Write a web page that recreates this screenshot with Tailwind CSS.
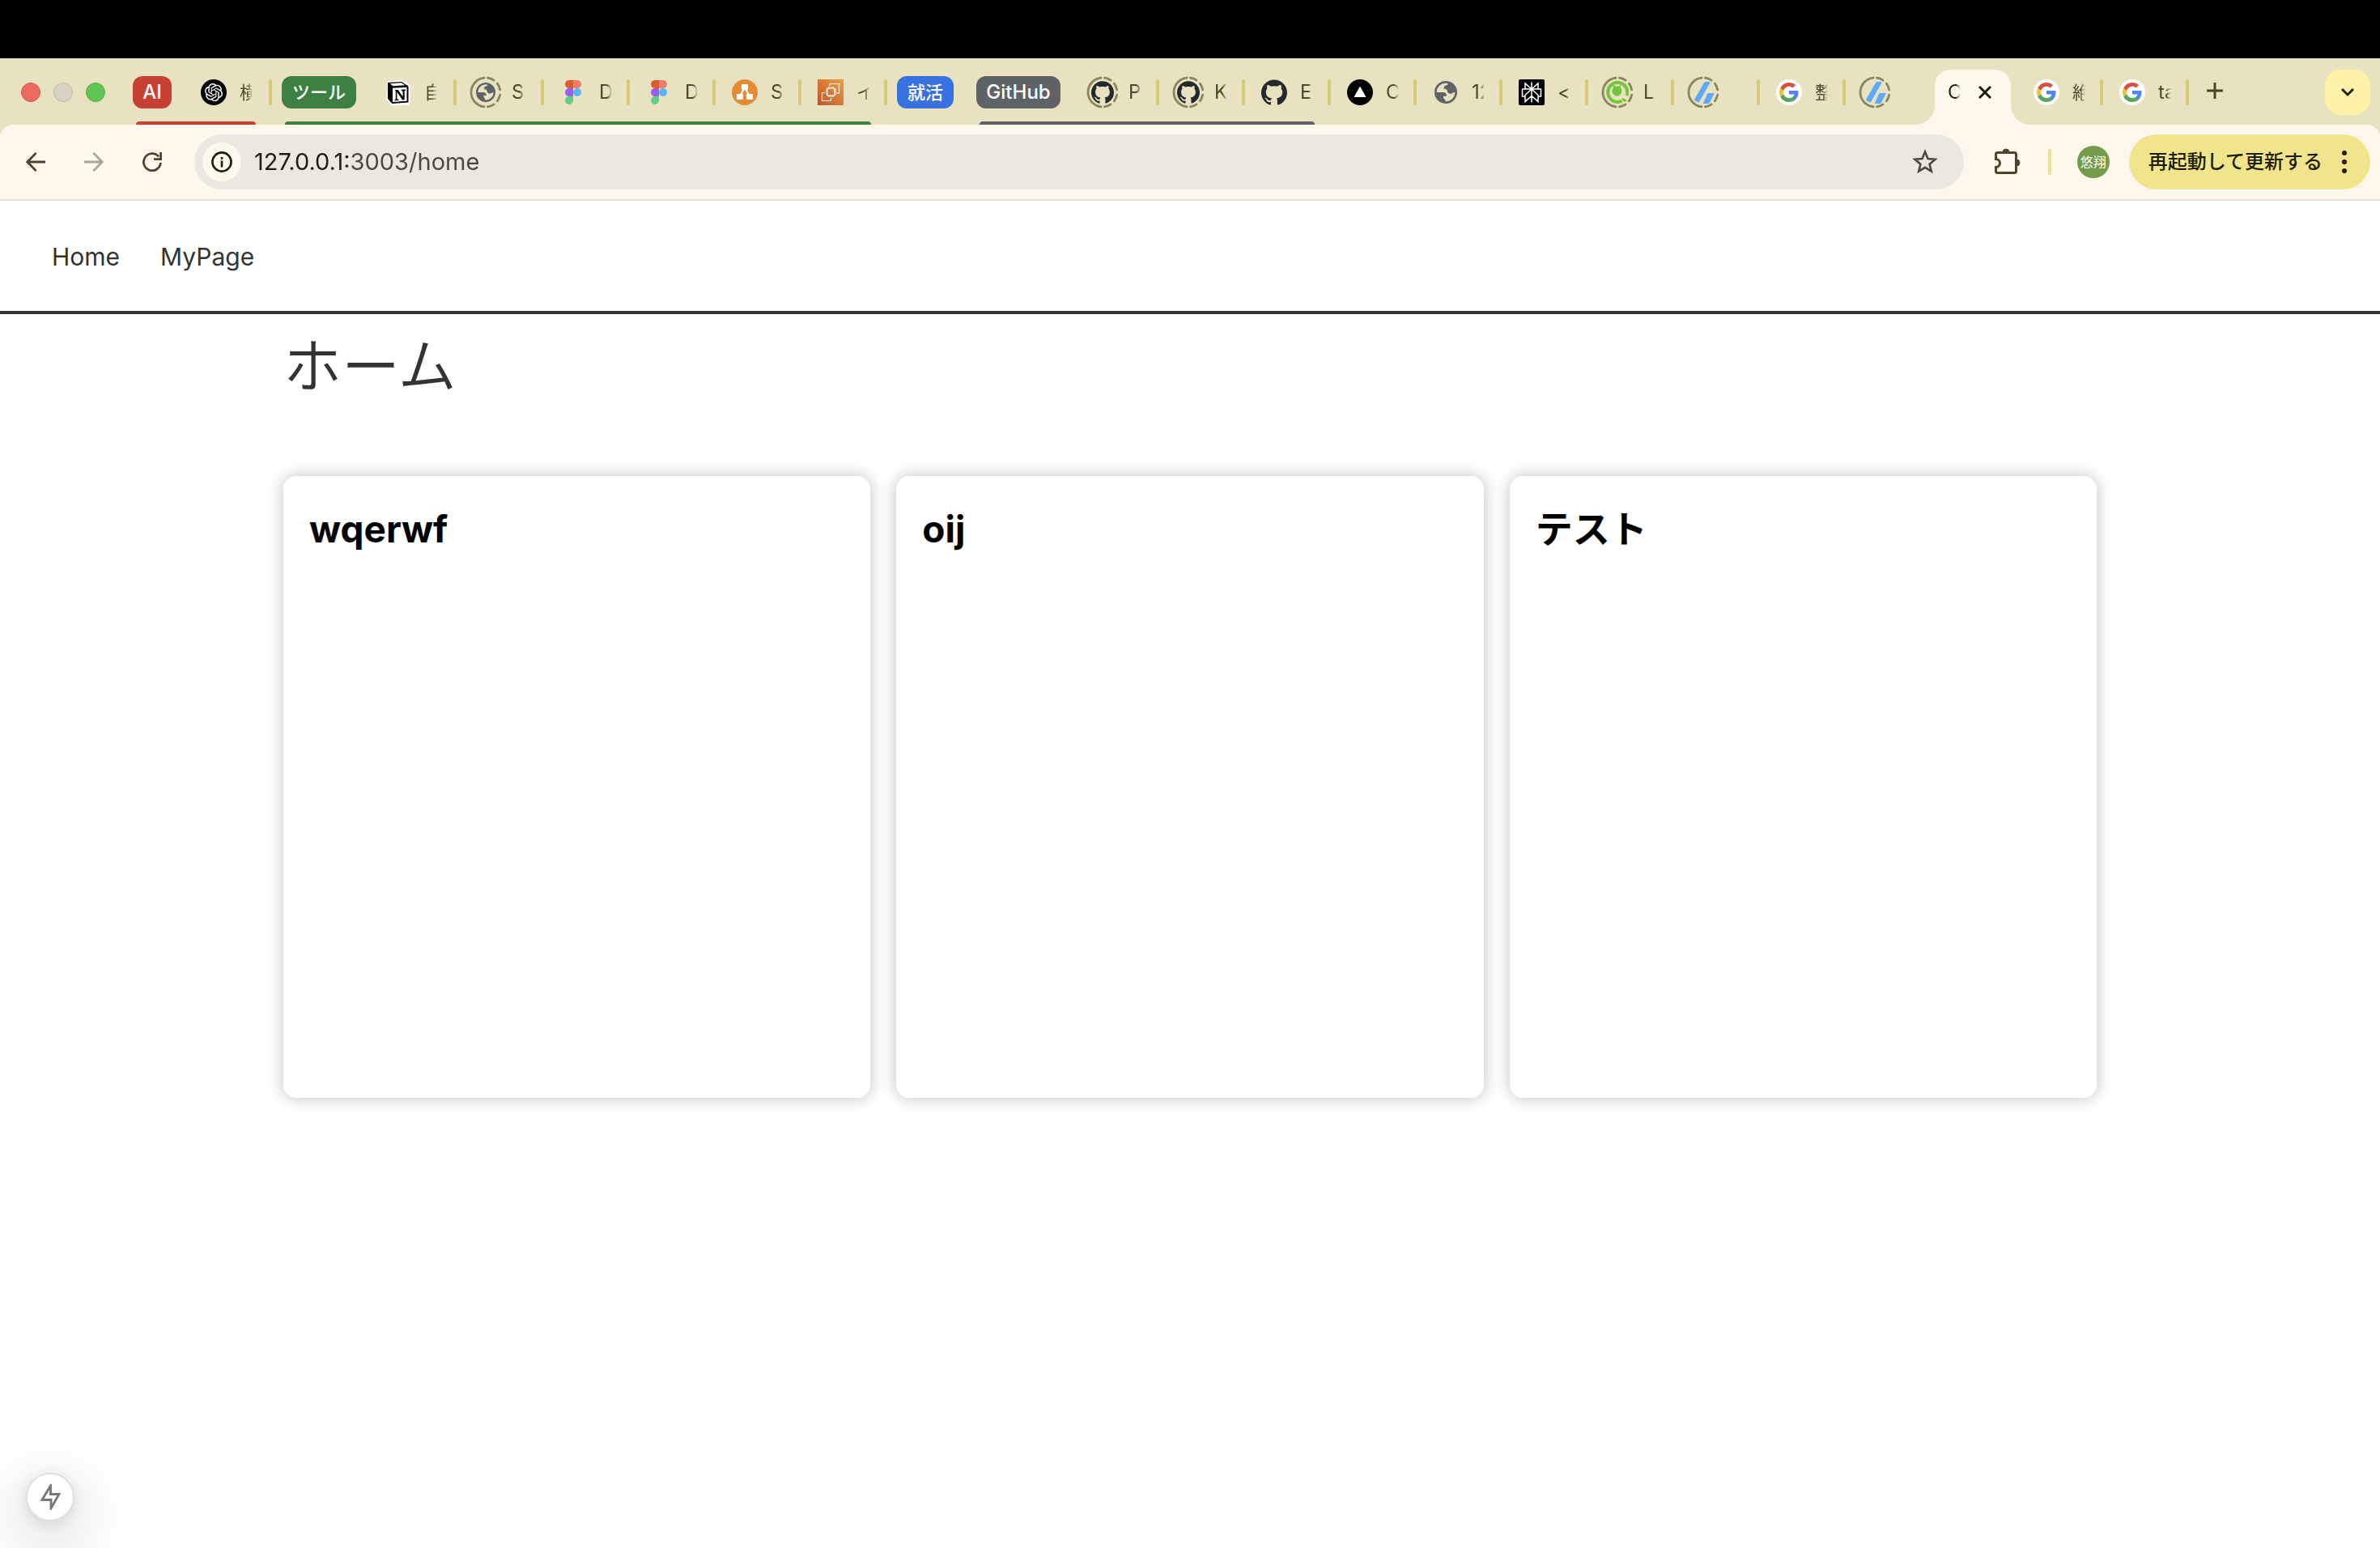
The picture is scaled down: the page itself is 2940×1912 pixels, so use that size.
<!DOCTYPE html>
<html lang="ja">
<head>
<meta charset="utf-8">
<title>Home</title>
<script src="https://cdn.jsdelivr.net/npm/@tailwindcss/browser@4"></script>
</head>
<body class="flex min-h-screen flex-col bg-white font-['Inter','Noto_Sans_CJK_JP',sans-serif] text-[#333333]">

<svg class="absolute size-0" aria-hidden="true">
  <symbol id="ring" viewBox="0 0 40 40">
    <path d="M18.1 2.1A18 18 0 0 0 18.1 37.9M22.5 2.2A18 18 0 0 1 30.1 5.1M34.4 9.2A18 18 0 0 1 37.7 16.9M37.7 23.1A18 18 0 0 1 34.4 30.8M30.1 34.9A18 18 0 0 1 22.5 37.8" fill="none" stroke="#8a8460" stroke-width="2.8" stroke-linecap="round"/>
  </symbol>
  <symbol id="globe" viewBox="0 0 84 84">
    <circle cx="42" cy="42" r="38" fill="none" stroke="#5f6368" stroke-width="8"/>
    <path d="M50 6C52 12 48 16 40 17C36 18 36 24 34 30C40 28 46 30 47 36C48 44 54 48 62 47C68 46 70 40 80 42A38 38 0 0 0 50 6Z" fill="#5f6368"/>
    <path d="M4 42H30C42 42 45 48 45 56H34C32 62 34 66 40 70V80A38 38 0 0 1 4 42Z" fill="#5f6368"/>
  </symbol>
  <symbol id="openai" viewBox="0 0 32 32">
    <circle cx="16" cy="16" r="16" fill="#000"/>
    <g transform="translate(5 5) scale(.92)"><path fill="#fff" d="M22.2819 9.8211a5.9847 5.9847 0 0 0-.5157-4.9108 6.0462 6.0462 0 0 0-6.5098-2.9A6.0651 6.0651 0 0 0 4.9807 4.1818a5.9847 5.9847 0 0 0-3.9977 2.9 6.0462 6.0462 0 0 0 .7427 7.0966 5.98 5.98 0 0 0 .511 4.9107 6.051 6.051 0 0 0 6.5146 2.9001A5.9847 5.9847 0 0 0 13.2599 24a6.0557 6.0557 0 0 0 5.7718-4.2058 5.9894 5.9894 0 0 0 3.9977-2.9001 6.0557 6.0557 0 0 0-.7475-7.0729zm-9.022 12.6081a4.4755 4.4755 0 0 1-2.8764-1.0408l.1419-.0804 4.7783-2.7582a.7948.7948 0 0 0 .3927-.6813v-6.7369l2.02 1.1686a.071.071 0 0 1 .038.052v5.5826a4.504 4.504 0 0 1-4.4945 4.4944zm-9.6607-4.1254a4.4708 4.4708 0 0 1-.5346-3.0137l.142.0852 4.783 2.7582a.7712.7712 0 0 0 .7806 0l5.8428-3.3685v2.3324a.0804.0804 0 0 1-.0332.0615L9.74 19.9502a4.4992 4.4992 0 0 1-6.1408-1.6464zM2.3408 7.8956a4.485 4.485 0 0 1 2.3655-1.9728V11.6a.7664.7664 0 0 0 .3879.6765l5.8144 3.3543-2.0201 1.1685a.0757.0757 0 0 1-.071 0l-4.8303-2.7865A4.504 4.504 0 0 1 2.3408 7.872zm16.5963 3.8558L13.1038 8.364 15.1192 7.2a.0757.0757 0 0 1 .071 0l4.8303 2.7913a4.4944 4.4944 0 0 1-.6765 8.1042v-5.6772a.79.79 0 0 0-.407-.667zm2.0107-3.0231l-.142-.0852-4.7735-2.7818a.7759.7759 0 0 0-.7854 0L9.409 9.2297V6.8974a.0662.0662 0 0 1 .0284-.0615l4.8303-2.7866a4.4992 4.4992 0 0 1 6.6802 4.66zM8.3065 12.863l-2.02-1.1638a.0804.0804 0 0 1-.038-.0567V6.0742a4.4992 4.4992 0 0 1 7.3757-3.4537l-.142.0805L8.704 5.459a.7948.7948 0 0 0-.3927.6813zm1.0976-2.3654l2.602-1.4998 2.6069 1.4998v2.9994l-2.5974 1.4997-2.6067-1.4997Z"/></g>
  </symbol>
  <symbol id="notion" viewBox="0 0 32 32">
    <path d="M3 3.5L20 1.5L29.5 7V28.5L28 30.5L8.500 31.500L2.500 25Z" fill="#fff" stroke="#fff" stroke-width="2" stroke-linejoin="round"/>
    <path d="M3 4L20 3L28.500 8.500V28.500L8.500 30L3 24Z" fill="#000"/>
    <path d="M5.500 5.200L19.500 4.200L24.500 7.300L9.500 8.300Z" fill="#fff"/>
    <path d="M9 10.800L26.500 9.800V26.800L9 28Z" fill="#fff"/>
    <path d="M11.500 13.300L15.800 13L21.600 21.600V14.600L19.700 14.200V12.800L25 12.500V13.800L23.700 14.300V25.200L21.200 25.600L14.400 15.600V24.200L16.400 24.700V26L11.500 26.300V25L12.800 24.400V15Z" fill="#000"/>
  </symbol>
  <symbol id="figma" viewBox="0 0 20 30">
    <path d="M5 0H10V10H5A5 5 0 0 1 5 0Z" fill="#e0592f"/>
    <path d="M10 0H15A5 5 0 0 1 15 10H10Z" fill="#ee7c68"/>
    <path d="M5 10H10V20H5A5 5 0 0 1 5 10Z" fill="#9a5cf6"/>
    <circle cx="15" cy="15" r="5" fill="#57b6fa"/>
    <path d="M5 20H10V25A5 5 0 1 1 5 20Z" fill="#62cd89"/>
  </symbol>
  <symbol id="drawio" viewBox="0 0 32 32">
    <circle cx="16" cy="16" r="16" fill="#e38c34"/>
    <path d="M16 10L10 21M16 10L22 21" stroke="#fff" stroke-width="2"/>
    <rect x="12" y="6" width="8" height="7" rx="1" fill="#fff"/>
    <rect x="6" y="18" width="8" height="7" rx="1" fill="#fff"/>
    <rect x="18" y="18" width="8" height="7" rx="1" fill="#fff"/>
  </symbol>
  <linearGradient id="ec2fill" x1="0" y1="1" x2="1" y2="0"><stop offset="0" stop-color="#bd5530"/><stop offset="1" stop-color="#f09e38"/></linearGradient>
  <symbol id="ec2" viewBox="0 0 32 32">
    <rect width="32" height="32" fill="url(#ec2fill)"/>
    <g fill="none" stroke="#fff" stroke-width="1.2">
      <rect x="12" y="11" width="9" height="9"/>
      <path d="M15 5.500H26.500V17H23M9 16.500H5.500V26.500H16.500V23M14 9V11M16.500 9V11M19 9V11M14 20V22M16.500 20V22M19 20V22M10 13H12M10 15.500H12M10 18H12M21 13H23M21 15.500H23M21 18H23M15 8V5.500"/>
    </g>
  </symbol>
  <symbol id="github" viewBox="0 0 24 24">
    <path fill="#24292f" d="M12 .297c-6.630 0-12 5.373-12 12 0 5.303 3.438 9.800 8.205 11.385.6.113.82-.258.82-.577 0-.285-.01-1.040-.015-2.040-3.338.724-4.042-1.610-4.042-1.610C4.422 18.070 3.633 17.700 3.633 17.700c-1.087-.744.084-.729.084-.729 1.205.084 1.838 1.236 1.838 1.236 1.070 1.835 2.809 1.305 3.495.998.108-.776.417-1.305.76-1.605-2.665-.3-5.466-1.332-5.466-5.930 0-1.310.465-2.380 1.235-3.220-.135-.303-.54-1.523.105-3.176 0 0 1.005-.322 3.300 1.230.96-.267 1.980-.399 3-.405 1.020.006 2.040.138 3 .405 2.280-1.552 3.285-1.230 3.285-1.230.645 1.653.24 2.873.12 3.176.765.84 1.230 1.910 1.230 3.220 0 4.610-2.805 5.625-5.475 5.920.42.36.81 1.096.81 2.220 0 1.606-.015 2.896-.015 3.286 0 .315.21.69.825.57C20.565 22.092 24 17.592 24 12.297c0-6.627-5.373-12-12-12"/>
  </symbol>
  <symbol id="vercel" viewBox="0 0 32 32">
    <circle cx="16" cy="16" r="16" fill="#000"/><path d="M16 8.500L23.500 22H8.500Z" fill="#fff"/>
  </symbol>
  <symbol id="perplexity" viewBox="0 0 32 32">
    <rect width="32" height="32" rx="2" fill="#000"/>
    <path d="M16 3.500V28.500M16 12L8 5V12M16 12L24 5V12M4.500 12H27.500V21H24M27.500 12M8 21H4.500V12M16 12L8 19.500V27.500L16 20.500L24 27.500V19.500Z" fill="none" stroke="#fff" stroke-width="1.500"/>
  </symbol>
  <symbol id="qiita" viewBox="0 0 28 28">
    <path d="M25.500 18A12 12 0 1 0 19.500 24.700" fill="none" stroke="#73c63b" stroke-width="4"/>
    <circle cx="13.500" cy="12.500" r="6" fill="#73c63b"/>
    <path d="M8 5L10 10L13 7ZM19 5L17 10L14 7Z" fill="#73c63b"/>
    <path d="M20 22L24.500 25" stroke="#73c63b" stroke-width="3"/>
  </symbol>
  <symbol id="zenn" viewBox="0 0 28 28">
    <path d="M17 1H21Q23 1 22 3L9 26Q8.500 27 7 26L3.500 24Q2.800 23.500 3.200 22.800L15 2.200Q15.600 1 17 1ZM20.500 15H26.500Q28 15 27.300 16.300L22 26.500Q21.300 28 20 28H14.500Q13.500 28 14 27L19 16Q19.500 15 20.500 15Z" fill="#5fa8fb"/>
  </symbol>
  <symbol id="google" viewBox="0 0 32 32">
    <circle cx="16" cy="16" r="16" fill="#fff"/>
    <g transform="translate(4 4)">
      <path d="M23.500 12.270c0-.79-.07-1.540-.19-2.270H12v4.510h6.470c-.29 1.480-1.140 2.730-2.400 3.580v3h3.860c2.260-2.090 3.570-5.170 3.570-8.820z" fill="#5185ec"/>
      <path d="M12 24c3.240 0 5.950-1.080 7.930-2.910l-3.860-3c-1.080.72-2.450 1.160-4.070 1.160-3.130 0-5.780-2.110-6.730-4.960H1.290v3.090C3.260 21.300 7.310 24 12 24z" fill="#58a55c"/>
      <path d="M5.270 14.290c-.25-.72-.38-1.490-.38-2.290s.14-1.570.38-2.290V6.620H1.290C.47 8.240 0 10.060 0 12s.47 3.760 1.290 5.380l3.980-3.090z" fill="#f1be42"/>
      <path d="M12 4.750c1.770 0 3.350.61 4.600 1.800l3.420-3.420C17.950 1.190 15.240 0 12 0 7.310 0 3.260 2.700 1.290 6.620l3.980 3.090c.95-2.850 3.600-4.960 6.730-4.960z" fill="#d85140"/>
    </g>
  </symbol>
</svg>

<div class="h-[72px] bg-black"></div>

<!-- Tab strip -->
<div class="flex h-[82px] items-stretch bg-[#e9e2c0] pt-0.5 text-[24px] leading-8 text-[#4b462c]">
  <div class="flex w-[152px] shrink-0 items-center gap-4 pl-[26px]">
    <button aria-label="閉じる" class="size-6 rounded-full border border-[#d8574b] bg-[#ec6a5e]"></button>
    <button aria-label="最小化" class="size-6 rounded-full border border-[#bdb9a6] bg-[#d8d4c3]"></button>
    <button aria-label="拡大" class="size-6 rounded-full border border-[#50b03e] bg-[#61c654]"></button>
  </div>

  <div class="relative flex items-center">
    <button class="mr-4 ml-3 h-10 w-12 rounded-xl bg-[#c84031] font-medium text-white">AI</button>
    <a href="#" class="flex w-[108px] items-center"><span class="flex w-[68px] justify-center pl-1"><svg class="size-8"><use href="#openai"/></svg></span><span class="w-4 overflow-hidden text-[22px] whitespace-nowrap [mask-image:linear-gradient(to_right,black_60%,transparent)]">横</span><span class="ml-auto h-8 w-1 rounded-sm bg-[#d5ca76]"></span></a>
    <span class="absolute right-5 bottom-0 left-4 h-1 rounded-t-sm bg-[#c84031]"></span>
  </div>

  <div class="relative flex items-center">
    <button class="mr-4 ml-3 h-10 w-[92px] rounded-xl bg-[#3d8042] text-[22px] font-medium text-white">ツール</button>
    <a href="#" class="flex w-[108px] items-center"><span class="flex w-[68px] justify-center pl-1"><svg class="size-8"><use href="#notion"/></svg></span><span class="w-4 overflow-hidden text-[22px] whitespace-nowrap [mask-image:linear-gradient(to_right,black_60%,transparent)]">自</span><span class="ml-auto h-8 w-1 rounded-sm bg-[#d5ca76]"></span></a>
    <a href="#" class="flex w-[108px] items-center"><span class="grid w-[68px] place-items-center pl-1"><svg class="col-start-1 row-start-1 size-10"><use href="#ring"/></svg><svg class="col-start-1 row-start-1 size-6"><use href="#globe"/></svg></span><span class="w-4 overflow-hidden whitespace-nowrap [mask-image:linear-gradient(to_right,black_60%,transparent)]">S</span><span class="ml-auto h-8 w-1 rounded-sm bg-[#d5ca76]"></span></a>
    <a href="#" class="flex w-[106px] items-center"><span class="flex w-[68px] justify-center pl-1"><svg class="h-[30px] w-5"><use href="#figma"/></svg></span><span class="w-4 overflow-hidden whitespace-nowrap [mask-image:linear-gradient(to_right,black_60%,transparent)]">D</span><span class="ml-auto h-8 w-1 rounded-sm bg-[#d5ca76]"></span></a>
    <a href="#" class="flex w-[106px] items-center"><span class="flex w-[68px] justify-center pl-1"><svg class="h-[30px] w-5"><use href="#figma"/></svg></span><span class="w-4 overflow-hidden whitespace-nowrap [mask-image:linear-gradient(to_right,black_60%,transparent)]">D</span><span class="ml-auto h-8 w-1 rounded-sm bg-[#d5ca76]"></span></a>
    <a href="#" class="flex w-[106px] items-center"><span class="flex w-[68px] justify-center pl-1"><svg class="size-8"><use href="#drawio"/></svg></span><span class="w-4 overflow-hidden whitespace-nowrap [mask-image:linear-gradient(to_right,black_60%,transparent)]">S</span><span class="ml-auto h-8 w-1 rounded-sm bg-[#d5ca76]"></span></a>
    <a href="#" class="flex w-[106px] items-center"><span class="flex w-[68px] justify-center pl-1"><svg class="size-8"><use href="#ec2"/></svg></span><span class="w-4 overflow-hidden text-[22px] whitespace-nowrap [mask-image:linear-gradient(to_right,black_60%,transparent)]">イ</span><span class="ml-auto h-8 w-1 rounded-sm bg-[#d5ca76]"></span></a>
    <span class="absolute right-5 bottom-0 left-4 h-1 rounded-t-sm bg-[#3d8042]"></span>
  </div>

  <div class="flex items-center">
    <button class="mr-4 ml-3 h-10 w-[70px] rounded-xl bg-[#3871e0] text-[22px] font-medium text-white">就活</button>
  </div>

  <div class="relative flex items-center">
    <button class="mr-4 ml-3 h-10 w-[104px] rounded-xl bg-[#5f6368] font-medium text-white">GitHub</button>
    <a href="#" class="flex w-[106px] items-center"><span class="grid w-[68px] place-items-center pl-1"><svg class="col-start-1 row-start-1 size-10"><use href="#ring"/></svg><svg class="col-start-1 row-start-1 size-7"><use href="#github"/></svg></span><span class="w-4 overflow-hidden whitespace-nowrap [mask-image:linear-gradient(to_right,black_60%,transparent)]">P</span><span class="ml-auto h-8 w-1 rounded-sm bg-[#d5ca76]"></span></a>
    <a href="#" class="flex w-[106px] items-center"><span class="grid w-[68px] place-items-center pl-1"><svg class="col-start-1 row-start-1 size-10"><use href="#ring"/></svg><svg class="col-start-1 row-start-1 size-7"><use href="#github"/></svg></span><span class="w-4 overflow-hidden whitespace-nowrap [mask-image:linear-gradient(to_right,black_60%,transparent)]">K</span><span class="ml-auto h-8 w-1 rounded-sm bg-[#d5ca76]"></span></a>
    <a href="#" class="flex w-[106px] items-center"><span class="flex w-[68px] justify-center pl-1"><svg class="size-8"><use href="#github"/></svg></span><span class="w-4 overflow-hidden whitespace-nowrap [mask-image:linear-gradient(to_right,black_60%,transparent)]">E</span><span class="ml-auto h-8 w-1 rounded-sm bg-[#d5ca76]"></span></a>
    <span class="absolute right-5 bottom-0 left-4 h-1 rounded-t-sm bg-[#5f6368]"></span>
  </div>

  <div class="flex items-center">
    <a href="#" class="flex w-[106px] items-center"><span class="flex w-[68px] justify-center pl-1"><svg class="size-8"><use href="#vercel"/></svg></span><span class="w-4 overflow-hidden whitespace-nowrap [mask-image:linear-gradient(to_right,black_60%,transparent)]">C</span><span class="ml-auto h-8 w-1 rounded-sm bg-[#d5ca76]"></span></a>
    <a href="#" class="flex w-[106px] items-center"><span class="flex w-[68px] justify-center pl-1"><svg class="size-7"><use href="#globe"/></svg></span><span class="w-4 overflow-hidden whitespace-nowrap [mask-image:linear-gradient(to_right,black_60%,transparent)]">12</span><span class="ml-auto h-8 w-1 rounded-sm bg-[#d5ca76]"></span></a>
    <a href="#" class="flex w-[106px] items-center"><span class="flex w-[68px] justify-center pl-1"><svg class="size-8"><use href="#perplexity"/></svg></span><span class="w-4 overflow-hidden whitespace-nowrap [mask-image:linear-gradient(to_right,black_60%,transparent)]">&lt;</span><span class="ml-auto h-8 w-1 rounded-sm bg-[#d5ca76]"></span></a>
    <a href="#" class="flex w-[106px] items-center"><span class="grid w-[68px] place-items-center pl-1"><svg class="col-start-1 row-start-1 size-10"><use href="#ring"/></svg><svg class="col-start-1 row-start-1 size-7"><use href="#qiita"/></svg></span><span class="w-4 overflow-hidden whitespace-nowrap [mask-image:linear-gradient(to_right,black_60%,transparent)]">L</span><span class="ml-auto h-8 w-1 rounded-sm bg-[#d5ca76]"></span></a>
    <a href="#" aria-label="Zenn" class="flex w-[106px] items-center"><span class="grid w-[68px] place-items-center pl-1"><svg class="col-start-1 row-start-1 size-10"><use href="#ring"/></svg><svg class="col-start-1 row-start-1 size-7"><use href="#zenn"/></svg></span><span class="ml-auto h-8 w-1 rounded-sm bg-[#d5ca76]"></span></a>
    <a href="#" class="flex w-[106px] items-center"><span class="flex w-[68px] justify-center pl-1"><svg class="size-8"><use href="#google"/></svg></span><span class="w-4 overflow-hidden text-[22px] whitespace-nowrap [mask-image:linear-gradient(to_right,black_60%,transparent)]">整</span><span class="ml-auto h-8 w-1 rounded-sm bg-[#d5ca76]"></span></a>
    <a href="#" aria-label="Zenn" class="flex w-[110px] items-center"><span class="grid w-[68px] place-items-center pl-1"><svg class="col-start-1 row-start-1 size-10"><use href="#ring"/></svg><svg class="col-start-1 row-start-1 size-7"><use href="#zenn"/></svg></span></a>
  </div>

  <div class="relative mt-3 flex w-[94px] items-center justify-between rounded-t-[20px] bg-[#fdf8eb] pr-6 pb-3 pl-4 text-[#1f1d10]">
    <svg class="absolute bottom-0 -left-6 size-6" viewBox="0 0 24 24"><path d="M24 0V24H0A24 24 0 0 0 24 0Z" fill="#fdf8eb"/></svg>
    <a href="#" class="w-4 overflow-hidden [mask-image:linear-gradient(to_right,black_60%,transparent)]">C</a>
    <button aria-label="タブを閉じる"><svg class="size-4" viewBox="0 0 16 16"><path d="M1 1L15 15M15 1L1 15" stroke="#1f1d10" stroke-width="3"/></svg></button>
    <svg class="absolute -right-6 bottom-0 size-6" viewBox="0 0 24 24"><path d="M0 0V24H24A24 24 0 0 1 0 0Z" fill="#fdf8eb"/></svg>
  </div>

  <div class="flex items-center pl-2">
    <a href="#" class="flex w-[106px] items-center"><span class="flex w-[68px] justify-center pl-1"><svg class="size-8"><use href="#google"/></svg></span><span class="w-4 overflow-hidden text-[22px] whitespace-nowrap [mask-image:linear-gradient(to_right,black_60%,transparent)]">絶</span><span class="ml-auto h-8 w-1 rounded-sm bg-[#d5ca76]"></span></a>
    <a href="#" class="flex w-[106px] items-center"><span class="flex w-[68px] justify-center pl-1"><svg class="size-8"><use href="#google"/></svg></span><span class="w-4 overflow-hidden whitespace-nowrap [mask-image:linear-gradient(to_right,black_60%,transparent)]">ta</span><span class="ml-auto h-8 w-1 rounded-sm bg-[#d5ca76]"></span></a>
    <button aria-label="新しいタブ" class="pb-1 pl-[22px]"><svg class="size-5" viewBox="0 0 20 20"><path d="M10 0V20M0 10H20" stroke="#4b462c" stroke-width="3"/></svg></button>
  </div>

  <div class="ml-auto flex items-center pr-3">
    <button aria-label="タブを検索" class="flex size-14 items-center justify-center rounded-[20px] bg-[#fdf2a7]"><svg class="size-4" viewBox="0 0 16 16"><path d="M1 4L8 11L15 4" fill="none" stroke="#1f1d10" stroke-width="3"/></svg></button>
  </div>
</div>

<!-- Toolbar -->
<div class="bg-[#e9e2c0]">
  <div class="flex h-[94px] items-center rounded-t-2xl border-b-2 border-[#e6e0d3] bg-[#fdf8eb] pr-3 pl-8">
    <button aria-label="戻る"><svg class="size-6" viewBox="0 0 24 24"><path d="M24 12H2M12.500 1L1.800 12L12.500 23" fill="none" stroke="#4b462c" stroke-width="2.800"/></svg></button>
    <button aria-label="進む" class="ml-12"><svg class="size-6" viewBox="0 0 24 24"><path d="M0 12H22M11.500 1L22.200 12L11.500 23" fill="none" stroke="#aba795" stroke-width="2.800"/></svg></button>
    <button aria-label="再読み込み" class="ml-12"><svg class="size-6" viewBox="0 0 24 24"><path d="M22.400 13A10.500 10.500 0 1 1 20 5.500" fill="none" stroke="#4b462c" stroke-width="2.800"/><path d="M22.600 0V8.600H14" fill="none" stroke="#4b462c" stroke-width="2.800"/></svg></button>

    <div class="ml-10 flex h-[68px] flex-1 items-center rounded-full bg-[#ece8e1] pr-8 pl-2.5">
      <button aria-label="サイト情報を表示" class="flex size-12 items-center justify-center rounded-full bg-[#fdf8eb]"><svg class="size-[26px]" viewBox="0 0 26 26"><circle cx="13" cy="13" r="11.600" fill="none" stroke="#1f1d10" stroke-width="2.600"/><path d="M13 11.500V19.500M13 7V9.800" stroke="#1f1d10" stroke-width="2.600"/></svg></button>
      <input aria-label="アドレス" type="text" value="127.0.0.1:3003/home" class="ml-4 h-10 min-w-0 flex-1 bg-linear-to-r from-[#1f1d13] from-[118px] to-[#4a4740] to-[118px] bg-clip-text text-[29px] text-transparent">
      <button aria-label="ブックマークに追加"><svg class="size-8" viewBox="0 0 32 32"><path d="M16 3.500L19.500 12L28.600 12.700L21.600 18.700L23.800 27.600L16 22.800L8.200 27.600L10.400 18.700L3.400 12.700L12.500 12Z" fill="none" stroke="#4a4740" stroke-width="2.600"/></svg></button>
    </div>

    <button aria-label="拡張機能" class="ml-[38px] pb-0.5"><svg class="size-8" viewBox="0 0 32 32"><path d="M3.500 5.500H24.500Q26.500 5.500 26.500 7.500V28.500Q26.500 30.500 24.500 30.500H3.500Q1.500 30.500 1.500 28.500V23.500A5 5 0 0 0 1.500 13.500V7.500Q1.500 5.500 3.500 5.500Z" fill="none" stroke="#4b462c" stroke-width="3"/><path d="M10 5A4 4 0 0 1 18 5ZM27 14A4 4 0 0 1 27 22Z" fill="#4b462c" stroke="#4b462c"/></svg></button>
    <span class="ml-[34px] h-8 w-1 rounded-sm bg-[#f0e48c]"></span>
    <button aria-label="プロフィール" class="ml-8 flex size-10 items-center justify-center rounded-full bg-[#739c48] text-[16px] leading-none text-white">悠翔</button>
    <button class="ml-6 flex h-[68px] items-center gap-6 rounded-full bg-[#f0e48c] pr-[29px] pl-6 text-[24px] font-medium text-[#1f1c00]">再起動して更新する<svg class="h-7 w-1.5" viewBox="0 0 6 28"><circle cx="3" cy="3" r="3" fill="#1f1c00"/><circle cx="3" cy="14" r="3" fill="#1f1c00"/><circle cx="3" cy="25" r="3" fill="#1f1c00"/></svg></button>
  </div>
</div>

<!-- Page -->
<header class="border-b-4 border-[#333333]">
  <nav class="flex h-[136px] items-center gap-[50px] px-16 pt-0.5 text-[30px]">
    <a href="#">Home</a>
    <a href="#">MyPage</a>
  </nav>
</header>

<main class="mx-auto w-full max-w-[2240px] flex-1 pt-2.5">
  <h1 class="text-[72px] leading-[108px] font-[350]">ホーム</h1>
  <div class="mt-[82px] grid grid-cols-3 gap-8 text-black">
    <a href="#" class="h-[768px] rounded-2xl bg-white p-8 shadow-[0_0_20px_rgba(0,0,0,0.25)]"><h2 class="text-[46px] leading-[66px] font-bold">wqerwf</h2></a>
    <a href="#" class="h-[768px] rounded-2xl bg-white p-8 shadow-[0_0_20px_rgba(0,0,0,0.25)]"><h2 class="text-[46px] leading-[66px] font-bold">oij</h2></a>
    <a href="#" class="h-[768px] rounded-2xl bg-white p-8 shadow-[0_0_20px_rgba(0,0,0,0.25)]"><h2 class="text-[46px] leading-[66px] font-bold">テスト</h2></a>
  </div>
</main>

<button aria-label="開発ツール" class="fixed bottom-[33px] left-8 flex size-[60px] items-center justify-center rounded-full border-2 border-[#e0e0e0] bg-white bg-clip-padding shadow-[0_22px_80px_rgba(0,0,0,0.25),0_4px_20px_rgba(0,0,0,0.12)]"><svg class="h-8 w-[25px]" viewBox="0 0 25 32"><path d="M12.500 2V12.500H23L13 30V19.500H2Z" fill="none" stroke="#777" stroke-width="2.800"/></svg></button>
</body>
</html>
